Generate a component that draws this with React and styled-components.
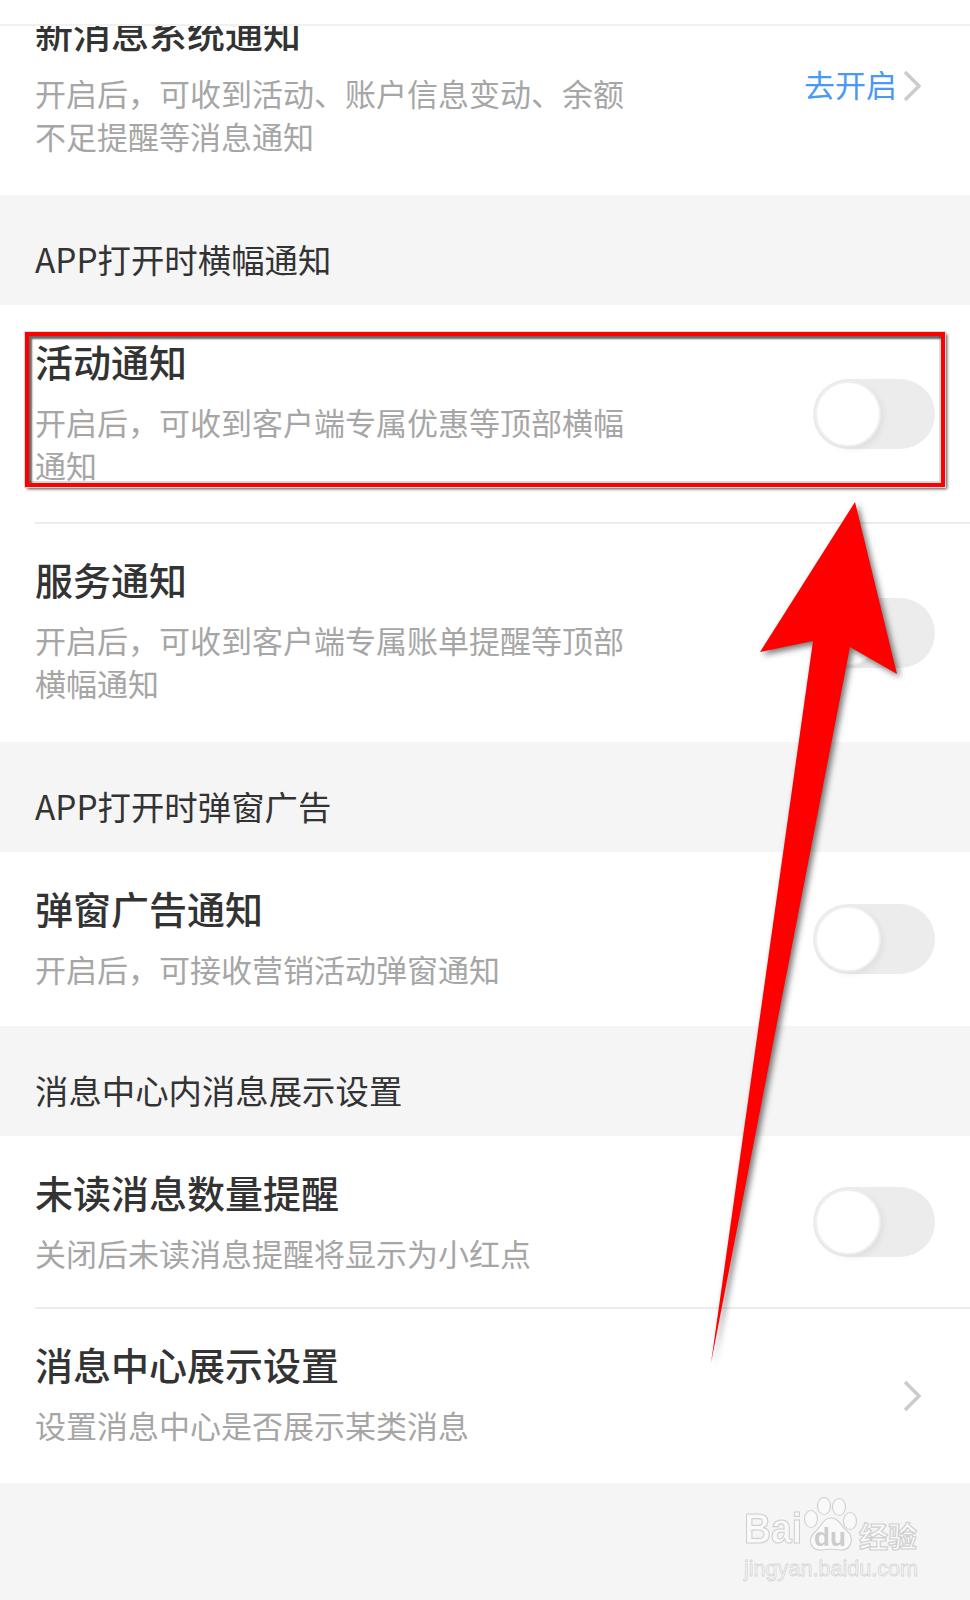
import React from 'react';
import styled, { createGlobalStyle } from 'styled-components';

const sans = `"Noto Sans CJK SC", "Noto Sans", "Liberation Sans", sans-serif`;

const GlobalStyle = createGlobalStyle`
  html, body {
    margin: 0;
    padding: 0;
    background: #f5f5f5;
  }
  * {
    box-sizing: border-box;
  }
`;

function Chevron() {
  return (
    <ChevronSvg viewBox="0 0 18 32">
      <path d="M2 2 L16 16 L2 30" fill="none" stroke="#cccccc" strokeWidth="3.5" />
    </ChevronSvg>
  );
}

function Toggle() {
  return (
    <Track>
      <Knob />
    </Track>
  );
}

function Row({ title, sub, height, divider, children }) {
  return (
    <RowBox $height={height}>
      <RowText>
        <Title>{title}</Title>
        <Sub>{sub}</Sub>
      </RowText>
      {children}
      {divider && <Divider />}
    </RowBox>
  );
}

function Watermark() {
  return (
    <Mark>
      <MarkTop>
        <MarkBai>Bai</MarkBai>
        <PawSvg viewBox="0 0 56 56">
          <g fill="#f9f9f9" stroke="#d2d2d2" strokeWidth="1.2">
            <ellipse cx="8" cy="22" rx="6.5" ry="8.5" />
            <ellipse cx="21" cy="9" rx="6.5" ry="8.5" />
            <ellipse cx="36" cy="10" rx="6.5" ry="8.5" />
            <ellipse cx="47" cy="24" rx="6.5" ry="8.5" />
            <path d="M28 21 C36 21 38 29 44 34 C52 41 48 54 37 53 C31 52 25 52 19 53 C7 54 4 42 12 35 C18 30 20 21 28 21 Z" />
          </g>
          <MarkDu x="27" y="49" textAnchor="middle">du</MarkDu>
        </PawSvg>
        <MarkCn>经验</MarkCn>
      </MarkTop>
      <MarkUrl>jingyan.baidu.com</MarkUrl>
    </Mark>
  );
}

export default function App() {
  return (
    <Page>
      <GlobalStyle />
      <TopBar />
      <List>
        <Row
          height={219}
          title="新消息系统通知"
          sub={`开启后\uFF0C可收到活动、账户信息变动、余额不足提醒等消息通知`}
        >
          <OpenLink>去开启</OpenLink>
          <Chevron />
        </Row>
        <Section>APP打开时横幅通知</Section>
        <Row
          height={218}
          divider
          title="活动通知"
          sub={`开启后\uFF0C可收到客户端专属优惠等顶部横幅通知`}
        >
          <Toggle />
        </Row>
        <Row
          height={219}
          title="服务通知"
          sub={`开启后\uFF0C可收到客户端专属账单提醒等顶部横幅通知`}
        >
          <Toggle />
        </Row>
        <Section>APP打开时弹窗广告</Section>
        <Row height={174} title="弹窗广告通知" sub={`开启后\uFF0C可接收营销活动弹窗通知`}>
          <Toggle />
        </Row>
        <Section>消息中心内消息展示设置</Section>
        <Row
          height={172}
          divider
          title="未读消息数量提醒"
          sub="关闭后未读消息提醒将显示为小红点"
        >
          <Toggle />
        </Row>
        <Row height={175} title="消息中心展示设置" sub="设置消息中心是否展示某类消息">
          <Chevron />
        </Row>
      </List>
      <Watermark />
      <Highlight />
      <ArrowSvg viewBox="0 0 970 1600">
        <polygon
          points="855,502 897,674 850,647 711,1363 813,641 760,652"
          fill="#ff0000"
        />
      </ArrowSvg>
    </Page>
  );
}

const Page = styled.div`
  position: relative;
  width: 970px;
  height: 1600px;
  overflow: hidden;
  background: #f5f5f5;
  font-family: ${sans};
`;

const TopBar = styled.div`
  position: absolute;
  top: 0;
  left: 0;
  z-index: 2;
  width: 100%;
  height: 26px;
  background: #ffffff;
  border-bottom: 2px solid #f1f1f1;
`;

const List = styled.div`
  display: flex;
  flex-direction: column;
  margin-top: -24px;
`;

const RowBox = styled.div`
  position: relative;
  display: flex;
  align-items: center;
  height: ${props => props.$height}px;
  padding: 30px 35px 0 35px;
  background: #ffffff;
`;

const RowText = styled.div`
  align-self: flex-start;
  width: 600px;
  margin-right: auto;
`;

const Title = styled.div`
  height: 52px;
  font-size: 38px;
  line-height: 52px;
  font-weight: 500;
  color: #333333;
`;

const Sub = styled.div`
  margin-top: 13px;
  font-size: 31px;
  line-height: 43px;
  color: #a6a6a6;
`;

const Divider = styled.div`
  position: absolute;
  z-index: 1;
  left: 35px;
  right: 0;
  bottom: -1px;
  height: 2px;
  background: #ececec;
`;

const Section = styled.div`
  display: flex;
  align-items: center;
  height: 110px;
  padding: 16px 0 0 35px;
  font-size: 33.4px;
  color: #333333;
  background: #f5f5f5;
`;

const OpenLink = styled.span`
  margin: -34px 6px 0 0;
  font-size: 31px;
  color: #4a98f7;
`;

const ChevronSvg = styled.svg`
  flex: none;
  width: 18px;
  height: 32px;
  margin: -30px 14px 0 0;
`;

const Track = styled.div`
  flex: none;
  position: relative;
  width: 122px;
  height: 70px;
  margin-top: -30px;
  border-radius: 35px;
  background: #ececec;
`;

const Knob = styled.div`
  position: absolute;
  top: 2px;
  left: 2px;
  width: 66px;
  height: 66px;
  border-radius: 50%;
  background: #ffffff;
  border: 2px solid #efefef;
  box-shadow: 3px 3px 6px rgba(0, 0, 0, 0.05);
`;

const Highlight = styled.div`
  position: absolute;
  z-index: 3;
  top: 332px;
  left: 25px;
  width: 920px;
  height: 155px;
  border: 4px solid #ff0000;
  outline: 1px solid #d9d9d9;
  box-shadow: 2px 2px 3px rgba(0, 0, 0, 0.7), inset 3px 3px 2px rgba(0, 0, 0, 0.6),
    inset -2px -2px 0 #dddddd;
`;

const ArrowSvg = styled.svg`
  position: absolute;
  z-index: 3;
  top: 0;
  left: 0;
  width: 970px;
  height: 1600px;
  filter: drop-shadow(3px 3px 3px rgba(0, 0, 0, 0.55));
`;

const Mark = styled.div`
  position: absolute;
  top: 1495px;
  left: 744px;
  width: 180px;
`;

const MarkTop = styled.div`
  display: flex;
  align-items: flex-end;
  height: 58px;
`;

const MarkBai = styled.span`
  width: 59px;
  font-family: "Liberation Sans", sans-serif;
  font-size: 43px;
  line-height: 50px;
  font-weight: 700;
  color: #f9f9f9;
  -webkit-text-stroke: 1.2px #d0d0d0;
  transform: scaleX(0.87);
  transform-origin: left center;
`;

const PawSvg = styled.svg`
  flex: none;
  width: 56px;
  height: 56px;
`;

const MarkDu = styled.text`
  font-family: "Liberation Sans", sans-serif;
  font-size: 26px;
  font-weight: 700;
  fill: #cccccc;
`;

const MarkCn = styled.span`
  font-size: 29px;
  line-height: 36px;
  font-weight: 700;
  color: #f9f9f9;
  -webkit-text-stroke: 1.2px #d0d0d0;
`;

const MarkUrl = styled.div`
  margin-top: 4px;
  font-family: "Liberation Sans", sans-serif;
  font-size: 21.6px;
  line-height: 24px;
  color: #f9f9f9;
  -webkit-text-stroke: 0.8px #d6d6d6;
  white-space: nowrap;
`;
